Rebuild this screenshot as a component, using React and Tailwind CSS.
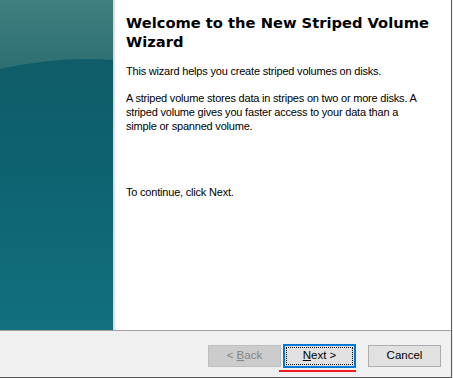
import React from "react";

function SidePanel() {
  return (
    <svg width="113" height="330" viewBox="0 0 113 330" className="block">
      <defs>
        <linearGradient id="bg" x1="0" y1="0" x2="0" y2="1">
          <stop offset="0" stopColor="#0f5a64" />
          <stop offset="0.5" stopColor="#0e6270" />
          <stop offset="1" stopColor="#12707f" />
        </linearGradient>
        <linearGradient id="hl" x1="0" y1="0" x2="0" y2="1">
          <stop offset="0" stopColor="#417f80" />
          <stop offset="1" stopColor="#2c6f72" />
        </linearGradient>
      </defs>
      <rect x="0" y="0" width="113" height="330" fill="url(#bg)" />
      <path d="M0 0 H113 V60 Q60 56 0 69 Z" fill="url(#hl)" />
    </svg>
  );
}

export default function App() {
  return (
    <div
      className="w-[453px] h-[378px] flex bg-white"
      style={{ fontFamily: '"Liberation Sans", Arial, sans-serif' }}
    >
      <div className="w-[451px] h-[378px] flex flex-col border-b border-[#5a5a5a]">
        <div className="flex h-[330px]">
          <SidePanel />
          <div className="w-[1px] bg-[#d4d4d4]" />
          <div className="w-[1px] bg-[#e6e6e6]" />
          <div className="w-[1px] bg-[#f3f3f3]" />
          <div className="flex-1 bg-white pl-[10px] pr-2 pt-[13px] text-[11px] tracking-[-0.2px] leading-[14px] text-black">
            <h1
              className="font-bold text-[14.7px] tracking-normal leading-[19px] text-black"
              style={{ fontFamily: '"DejaVu Sans", Verdana, sans-serif' }}
            >
              Welcome to the New Striped Volume Wizard
            </h1>
            <p className="mt-[13px] w-[300px]">This wizard helps you create striped volumes on disks.</p>
            <p className="mt-[13px] w-[300px]">
              A striped volume stores data in stripes on two or more disks. A striped volume gives you faster access to your data than a simple or spanned volume.
            </p>
            <p className="mt-[52px] w-[300px]">To continue, click Next.</p>
          </div>
        </div>
        <div className="h-[1px] bg-[#a0a0a0]" />
        <div className="flex-1 bg-[#f0f0f0] flex items-start pt-[14px] text-[11.5px]">
          <div className="ml-[208px] flex">
            <div className="w-[73px] h-[22px] border border-[#bfbfbf] bg-[#cccccc] text-[#838383] flex items-center justify-center">
              &lt; <span className="underline ml-[3px]">B</span>ack
            </div>
            <div className="ml-[2px] flex flex-col items-start -mt-[1px]">
              <div className="w-[73px] h-[24px] border-2 border-[#0078d7] bg-[#e1e1e1] p-[1px]">
                <div className="w-full h-full border border-dotted border-black flex items-center justify-center text-black">
                  <span className="underline">N</span>ext &gt;
                </div>
              </div>
              <div className="mt-[2px] -ml-[4px] w-[77px] h-[2px] bg-[#ec1c24]" />
            </div>
            <div className="ml-[12px] w-[73px] h-[22px] border border-[#adadad] bg-[#e1e1e1] text-black flex items-center justify-center">
              Cancel
            </div>
          </div>
        </div>
      </div>
      <div className="w-[1px] h-[378px] bg-[#5a5a5a]" />
      <div className="w-[1px] h-[378px] bg-[#f0f0f0]" />
    </div>
  );
}
